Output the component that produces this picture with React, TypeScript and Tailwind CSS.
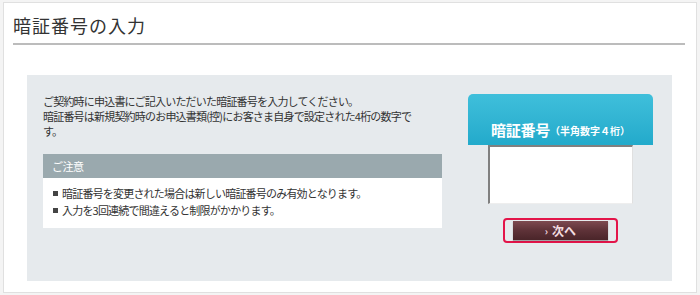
import React from "react";

export default function App() {
  const font = { fontFamily: '"Noto Sans CJK JP", "Noto Sans", sans-serif' };
  return (
    <div className="w-[700px] h-[295px] bg-[#f4f4f4] pt-[2px] pl-[3px]" style={font}>
      <div className="w-[694px] h-[291px] bg-white border border-[#e0e0e0] flex flex-col">
        <div className="pl-[9px] pr-[11px]">
          <h1 className="text-[18px] leading-[22px] tracking-[1px] text-[#333] pt-[11px] pb-[7px]">暗証番号の入力</h1>
          <div className="h-[2px] bg-[#bcbcbc]" />
        </div>
        <div className="ml-[23px] mt-[30px] w-[645px] h-[206px] bg-[#e6eaed] flex pl-[16px] pr-[19px] pt-[19px]">
          <div className="w-[399px] flex flex-col">
            <p className="text-[11px] leading-[15px] tracking-[-0.8px] text-[#333] whitespace-nowrap">
              ご契約時に申込書にご記入いただいた暗証番号を入力してください。
              <br />
              暗証番号は新規契約時のお申込書類(控)にお客さま自身で設定された4桁の数字で
              <br />
              す。
            </p>
            <div className="mt-[15px] h-[24px] bg-[#9aa9ae] flex items-center pl-[9px] text-[11px] text-white tracking-[-0.5px]">
              ご注意
            </div>
            <ul className="bg-white h-[50px] pt-[7px] pl-[10px] text-[11px] leading-[17px] tracking-[-0.8px] text-[#333]">
              <li className="flex items-center gap-[4px] whitespace-nowrap">
                <span className="inline-block w-[5px] h-[5px] bg-[#444]" />
                <span>暗証番号を変更された場合は新しい暗証番号のみ有効となります。</span>
              </li>
              <li className="flex items-center gap-[4px] whitespace-nowrap">
                <span className="inline-block w-[5px] h-[5px] bg-[#444]" />
                <span>入力を3回連続で間違えると制限がかかります。</span>
              </li>
            </ul>
          </div>
          <div className="ml-[26px] w-[185px] flex flex-col items-center">
            <div className="w-full h-[51px] rounded-t-[5px] bg-gradient-to-b from-[#3fbfdb] to-[#22aacb] flex items-end justify-center pb-[5px] text-white">
              <span className="text-[15px] font-bold leading-[20px] tracking-[-0.3px]">暗証番号</span>
              <span className="text-[10px] font-bold leading-[18px]">（半角数字４桁）</span>
            </div>
            <div className="w-[145px] h-[59px] bg-white border-t-2 border-l-2 border-r border-b border-t-[#808080] border-l-[#808080] border-r-[#e0e0e0] border-b-[#eeeeee]" />
            <div className="mt-[14px] w-[115px] h-[25px] border-2 border-[#e3154a] rounded-[4px] flex items-center justify-center">
              <button className="w-[95px] h-[19px] bg-gradient-to-b from-[#7e4a50] via-[#5e3238] to-[#4a2529] flex items-center justify-center text-[12px] font-bold text-[#f3dde0] leading-none shadow-[0_1px_1px_rgba(0,0,0,0.3)]">
                <span className="text-[10px] mr-[4px]">›</span>次へ
              </button>
            </div>
          </div>
        </div>
      </div>
    </div>
  );
}
